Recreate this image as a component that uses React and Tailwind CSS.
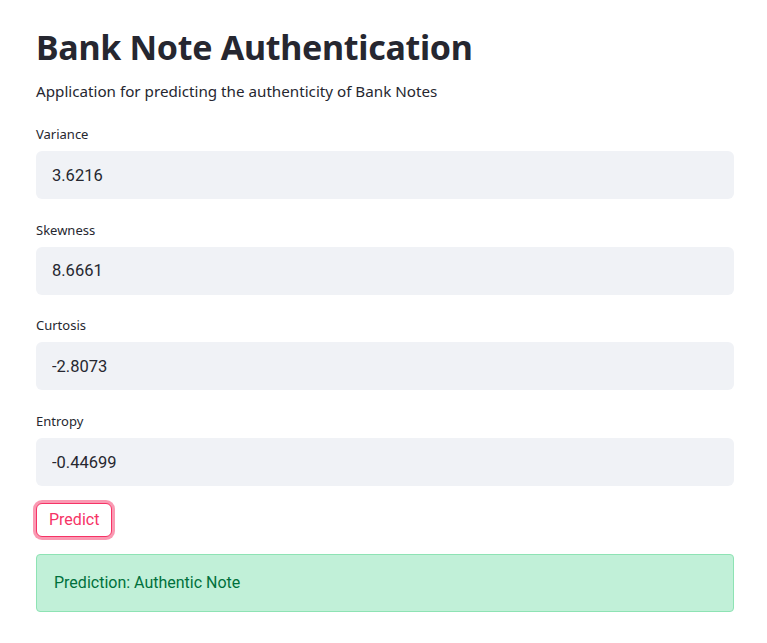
const FIELDS = [
  { label: 'Variance', value: '3.6216' },
  { label: 'Skewness', value: '8.6661' },
  { label: 'Curtosis', value: '-2.8073' },
  { label: 'Entropy', value: '-0.44699' },
];

const LABEL = "block text-[13px] leading-4 text-[#262730] mb-[9px] font-['Noto_Sans',sans-serif]";
const INPUT = "w-full h-[48px] rounded-[6px] bg-[#f0f2f6] px-4 text-[16.5px] text-[#262730] font-['Roboto',sans-serif] focus:outline-none";

export default function App() {
  return (
    <div className="min-h-[643px] bg-white">
      <div className="w-[698px] ml-[36px] pt-[23px]">
        <h1 className="text-[34px] leading-[48px] font-bold text-[#262730] font-['Noto_Sans',sans-serif] tracking-[-0.3px]">
          Bank Note Authentication
        </h1>
        <p className="mt-[8px] text-[15.2px] leading-6 text-[#262730] font-['Noto_Sans',sans-serif]">
          Application for predicting the authenticity of Bank Notes
        </p>

        <div className="mt-[23px] flex flex-col gap-[22.7px]">
          {FIELDS.map((f) => (
            <div key={f.label}>
              <label className={LABEL}>{f.label}</label>
              <input className={INPUT} defaultValue={f.value} />
            </div>
          ))}
        </div>

        <button
          type="button"
          className="mt-[17px] h-[34px] px-3 rounded-[6px] border border-[#f63366] bg-white text-[16px] text-[#f63366] font-['Roboto',sans-serif] shadow-[0_0_0_3px_rgba(246,51,102,0.5)]"
        >
          Predict
        </button>

        <div className="mt-[17px] h-[58px] flex items-center px-[17px] rounded-[4px] border border-[#8ee3b4] bg-[#c1f0d8] text-[16px] text-[#00703c] font-['Roboto',sans-serif]">
          Prediction: Authentic Note
        </div>
      </div>
    </div>
  );
}
